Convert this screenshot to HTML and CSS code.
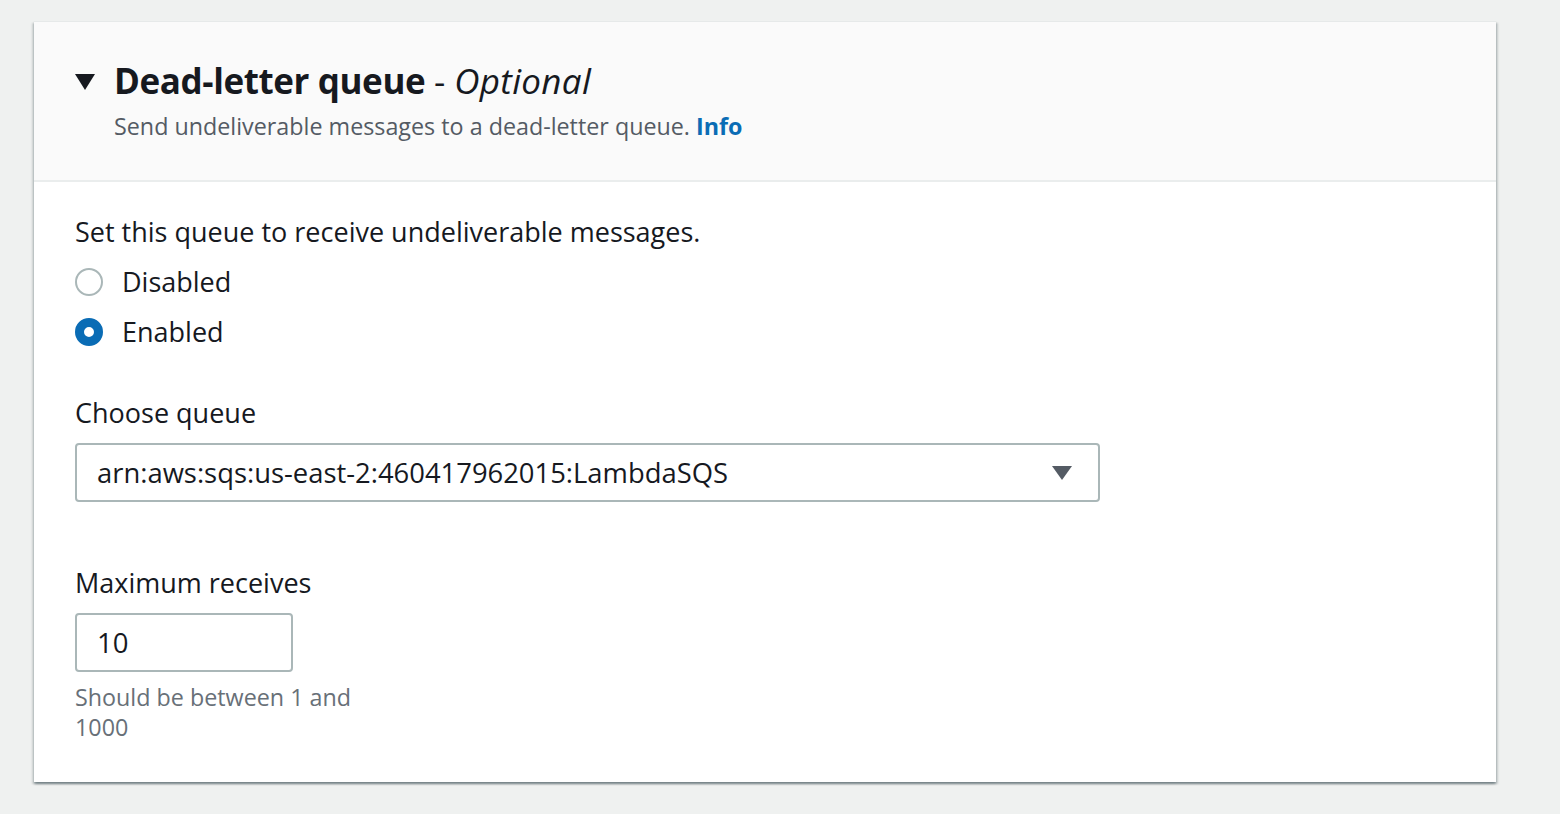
FILE: index.html
```html
<!DOCTYPE html>
<html lang="en">
<head>
<meta charset="utf-8">
<title>Dead-letter queue</title>
<link rel="stylesheet" href="styles.css">
</head>
<body>
<div class="page">
  <section class="card">
    <header class="card-header">
      <div class="title-row">
        <svg class="caret" width="20" height="16" viewBox="0 0 20 16"><path d="M0 0H20L10 16Z" fill="#16191f"/></svg>
        <h2 class="title">Dead-letter queue <span class="optional">- <em>Optional</em></span></h2>
      </div>
      <p class="desc">Send undeliverable messages to a dead-letter queue. <a class="info" href="#">Info</a></p>
    </header>
    <div class="card-body">
      <div class="field">
        <div class="label">Set this queue to receive undeliverable messages.</div>
        <div class="radios">
          <label class="radio"><span class="dot"></span><span>Disabled</span></label>
          <label class="radio"><span class="dot on"></span><span>Enabled</span></label>
        </div>
      </div>
      <div class="field">
        <div class="label">Choose queue</div>
        <div class="select">
          <span>arn:aws:sqs:us-east-2:460417962015:LambdaSQS</span>
          <svg width="20" height="14" viewBox="0 0 20 14"><path d="M0 0H20L10 14Z" fill="#545b64"/></svg>
        </div>
      </div>
      <div class="field field-wide">
        <div class="label">Maximum receives</div>
        <div class="input">10</div>
        <div class="help">Should be between 1 and 1000</div>
      </div>
    </div>
  </section>
</div>
</body>
</html>
```

FILE: styles.css
```css
html, body {
  margin: 0;
  padding: 0;
}
body {
  background: #eff1f0;
  font-family: "Open Sans", "Noto Sans", sans-serif;
  color: #16191f;
  width: 1560px;
  height: 814px;
  overflow: hidden;
}
.page {
  padding: 21px 0 0 34px;
}
.card {
  width: 1462px;
  background: #fff;
  border-top: 1px solid #e6e9e9;
  box-sizing: border-box;
  box-shadow: 0 2px 2px 0 rgba(0,28,36,.35), 2px 2px 2px 0 rgba(0,28,36,.15), -2px 2px 2px 0 rgba(0,28,36,.12);
}
.card-header {
  background: #fafafa;
  border-bottom: 2px solid #eaeded;
  padding: 37px 40px 32px 41px;
  height: 160px;
  box-sizing: border-box;
}
.title-row {
  display: flex;
  align-items: center;
  gap: 19px;
}
.caret {
  flex: none;
  margin-top: 2px;
}
.title {
  margin: 0;
  font-size: 35px;
  line-height: 44px;
  font-weight: 700;
  letter-spacing: -0.4px;
}
.optional {
  font-weight: 400;
  letter-spacing: 0;
}
.optional em {
  letter-spacing: 0.3px;
}
.desc {
  margin: 8px 0 0 39px;
  font-size: 23.3px;
  line-height: 30px;
  color: #545b64;
}
.info {
  color: #0a6cb5;
  font-weight: 700;
  text-decoration: none;
}
.card-body {
  padding: 32px 40px 40px 41px;
}
.field + .field {
  margin-top: 45px;
}
.field + .field-wide {
  margin-top: 63px;
}
.label {
  font-size: 27px;
  line-height: 36px;
}
.radios {
  margin-top: 14px;
  display: flex;
  flex-direction: column;
  gap: 14px;
}
.radio {
  display: flex;
  align-items: center;
  gap: 19px;
  font-size: 27px;
  line-height: 36px;
}
.dot {
  width: 28px;
  height: 28px;
  border-radius: 50%;
  border: 2px solid #aab7b8;
  box-sizing: border-box;
  background: #fff;
}
.dot.on {
  border: 9px solid #0a6cb5;
}
.select {
  margin-top: 12px;
  width: 1025px;
  height: 59px;
  border: 2px solid #aab7b8;
  border-radius: 4px;
  box-sizing: border-box;
  display: flex;
  align-items: center;
  justify-content: space-between;
  padding: 0 26px 0 20px;
  font-size: 27.4px;
}
.input {
  margin-top: 12px;
  width: 218px;
  height: 59px;
  border: 2px solid #aab7b8;
  border-radius: 4px;
  box-sizing: border-box;
  display: flex;
  align-items: center;
  padding: 0 20px;
  font-size: 27.5px;
}
.help {
  margin-top: 10px;
  width: 290px;
  font-size: 23.3px;
  line-height: 30px;
  color: #687078;
}
```
